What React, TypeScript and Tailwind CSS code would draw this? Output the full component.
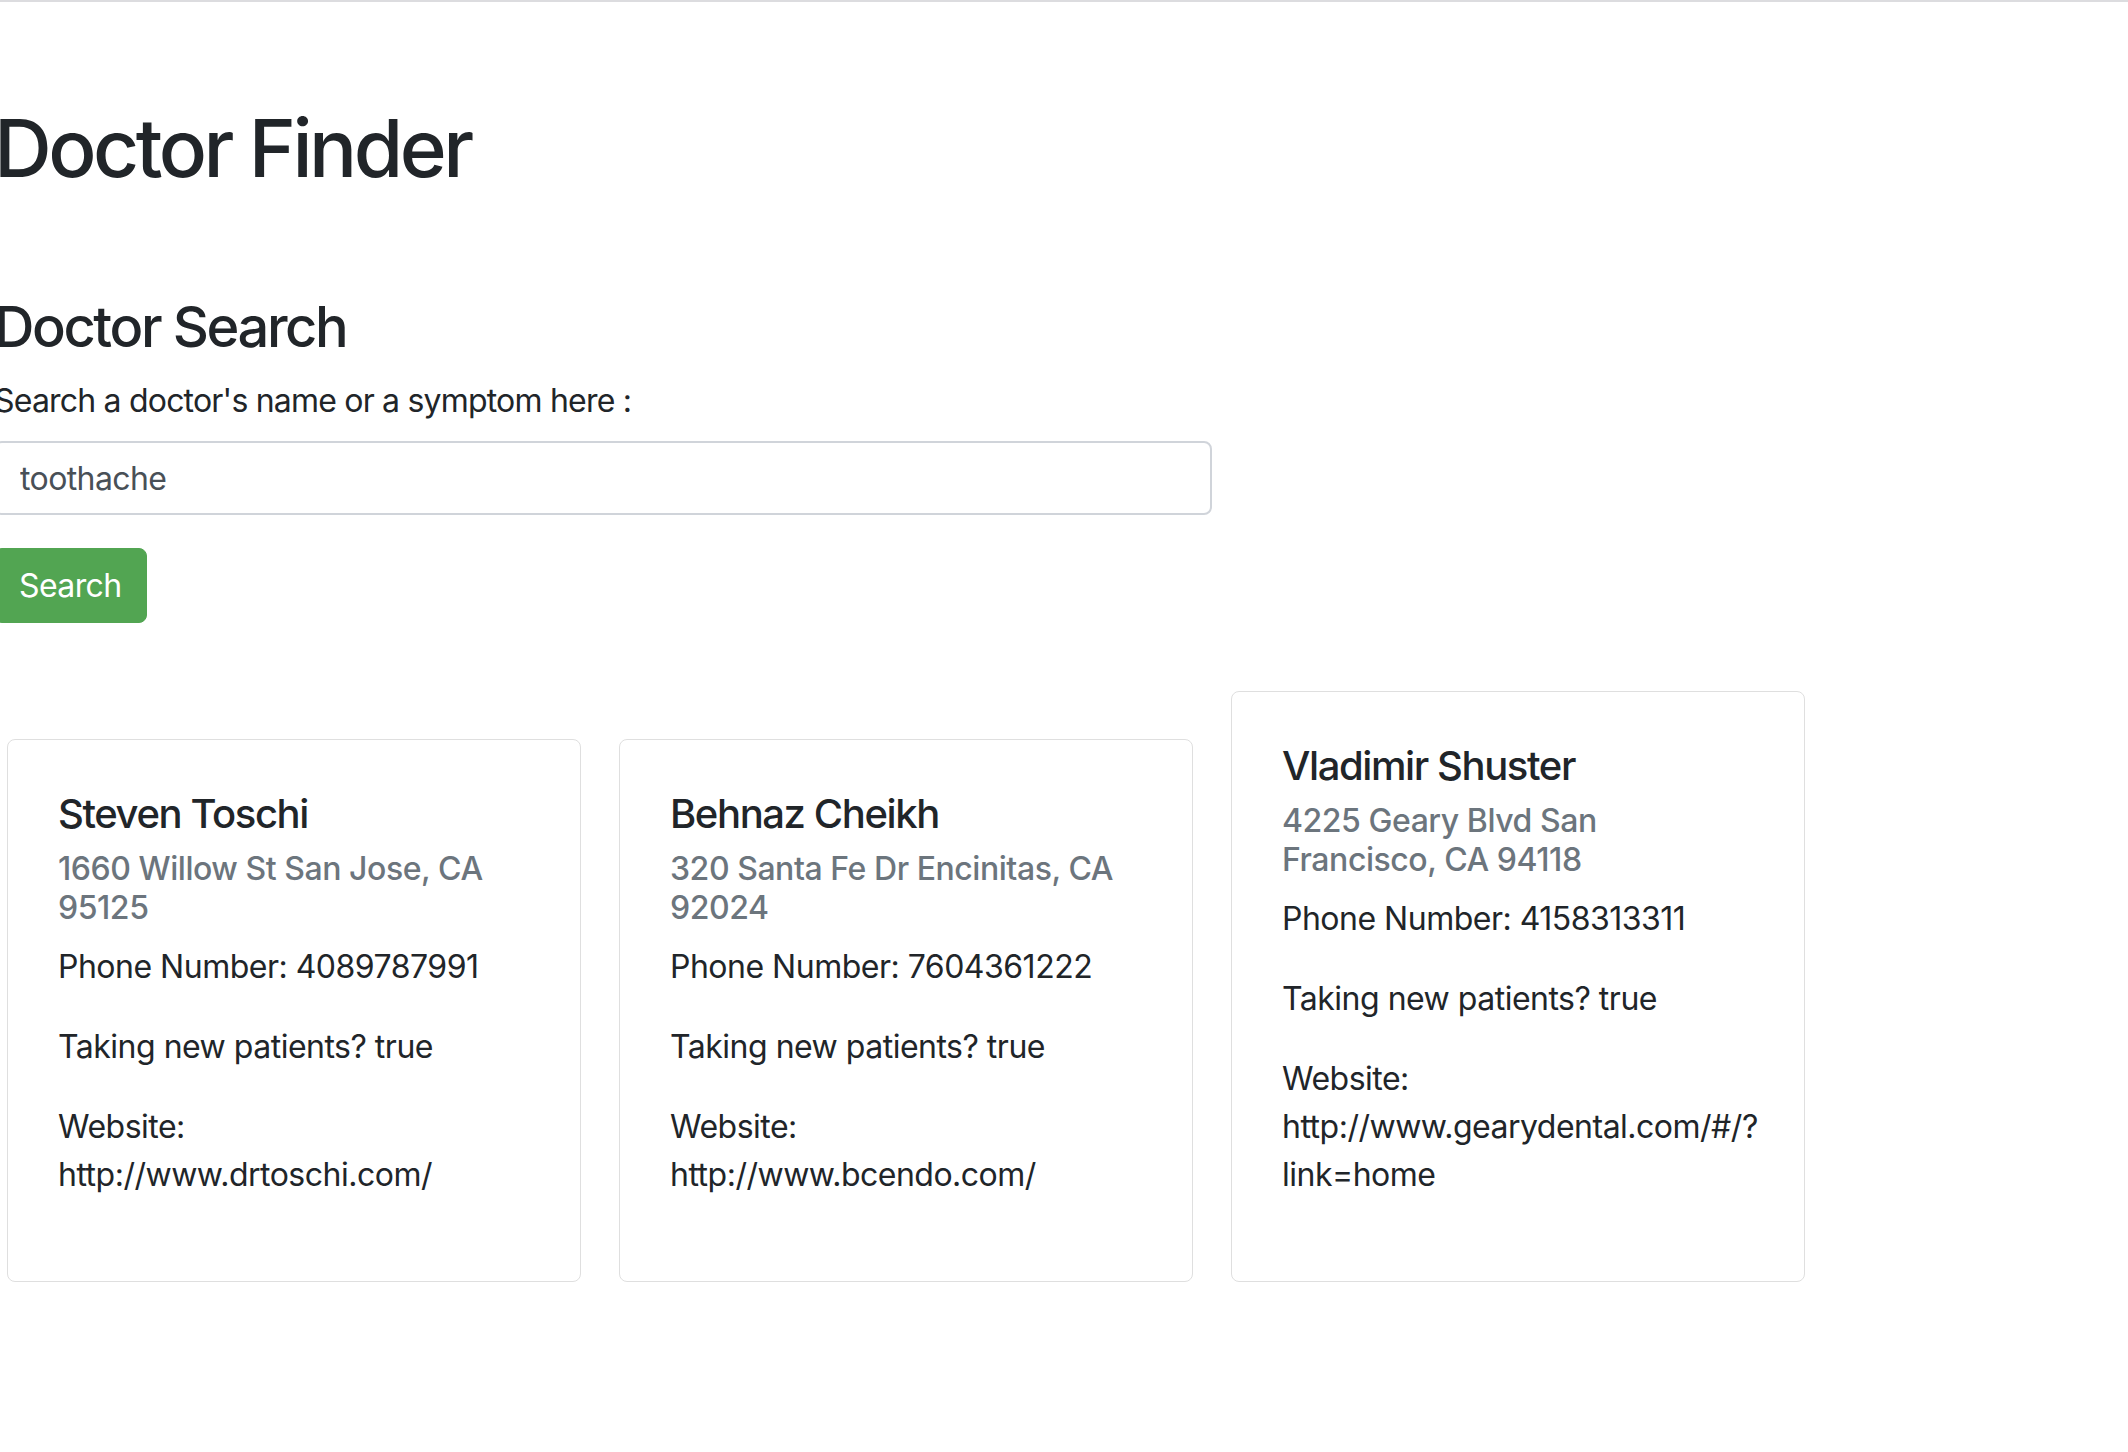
type Doctor = {
  name: string;
  address: string[];
  phone: string;
  accepting: boolean;
  website: string[];
};

const DOCTORS: Doctor[] = [
  {
    name: "Steven Toschi",
    address: ["1660 Willow St San Jose, CA", "95125"],
    phone: "4089787991",
    accepting: true,
    website: ["http://www.drtoschi.com/"],
  },
  {
    name: "Behnaz Cheikh",
    address: ["320 Santa Fe Dr Encinitas, CA", "92024"],
    phone: "7604361222",
    accepting: true,
    website: ["http://www.bcendo.com/"],
  },
  {
    name: "Vladimir Shuster",
    address: ["4225 Geary Blvd San", "Francisco, CA 94118"],
    phone: "4158313311",
    accepting: true,
    website: ["http://www.gearydental.com/#/?", "link=home"],
  },
];

function DoctorCard({ doctor }: { doctor: Doctor }) {
  return (
    <div className="w-[574px] shrink-0 rounded-[8px] border border-[#dfdfdf] bg-white px-[50px] pt-[50px] pb-[50px]">
      <h5 className="mb-[24px] text-[40px] font-medium leading-[1.2] tracking-[-1.4px] text-[#212529]">{doctor.name}</h5>
      <h6 className="-mt-[12px] mb-[16px] text-[32px] font-medium leading-[1.2] tracking-[-0.45px] text-[#6c757d]">
        {doctor.address.map((line, i) => (
          <span key={i} className="block">{line}</span>
        ))}
      </h6>
      <p className="mb-[32px] text-[32px] leading-[48px] tracking-[-0.5px]">Phone Number: {doctor.phone}</p>
      <p className="mb-[32px] text-[32px] leading-[48px] tracking-[-0.5px]">Taking new patients? {String(doctor.accepting)}</p>
      <p className="mb-[32px] text-[32px] leading-[48px] tracking-[-0.5px]">
        <span className="block">Website:</span>
        {doctor.website.map((line, i) => (
          <span key={i} className="block">{line}</span>
        ))}
      </p>
    </div>
  );
}

export default function App() {
  return (
    <div className="min-h-[1452px] overflow-hidden border-t-2 border-[#dcdcdf] bg-white font-['Inter','Liberation_Sans',sans-serif] text-[#212529]">
      <div className="-ml-[6px] pt-[98px]">
        <h1 className="text-[80px] font-medium leading-[1.2] tracking-[-3.5px]">Doctor Finder</h1>

        <h3 className="mt-[98px] text-[56px] font-medium leading-[1.2] tracking-[-2.4px]">Doctor Search</h3>
        <label className="mt-[16px] block text-[32px] leading-[48px] tracking-[-0.8px]">Search a doctor's name or a symptom here :</label>
        <input
          className="mt-[16px] block h-[74px] w-[1218px] rounded-[8px] border-2 border-[#d0d4da] bg-white px-[24px] text-[32px] tracking-[-0.6px] text-[#495057] outline-none"
          defaultValue="toothache"
        />
        <button className="mt-[33px] block h-[75px] rounded-[8px] border border-[#52a552] bg-[#52a552] px-[24px] text-[32px] leading-[48px] tracking-[-0.6px] text-white">
          Search
        </button>

        <div className="mt-[68px] ml-[13px] flex items-end gap-[38px]">
          {DOCTORS.map((d) => (
            <DoctorCard key={d.name} doctor={d} />
          ))}
        </div>
      </div>
    </div>
  );
}
